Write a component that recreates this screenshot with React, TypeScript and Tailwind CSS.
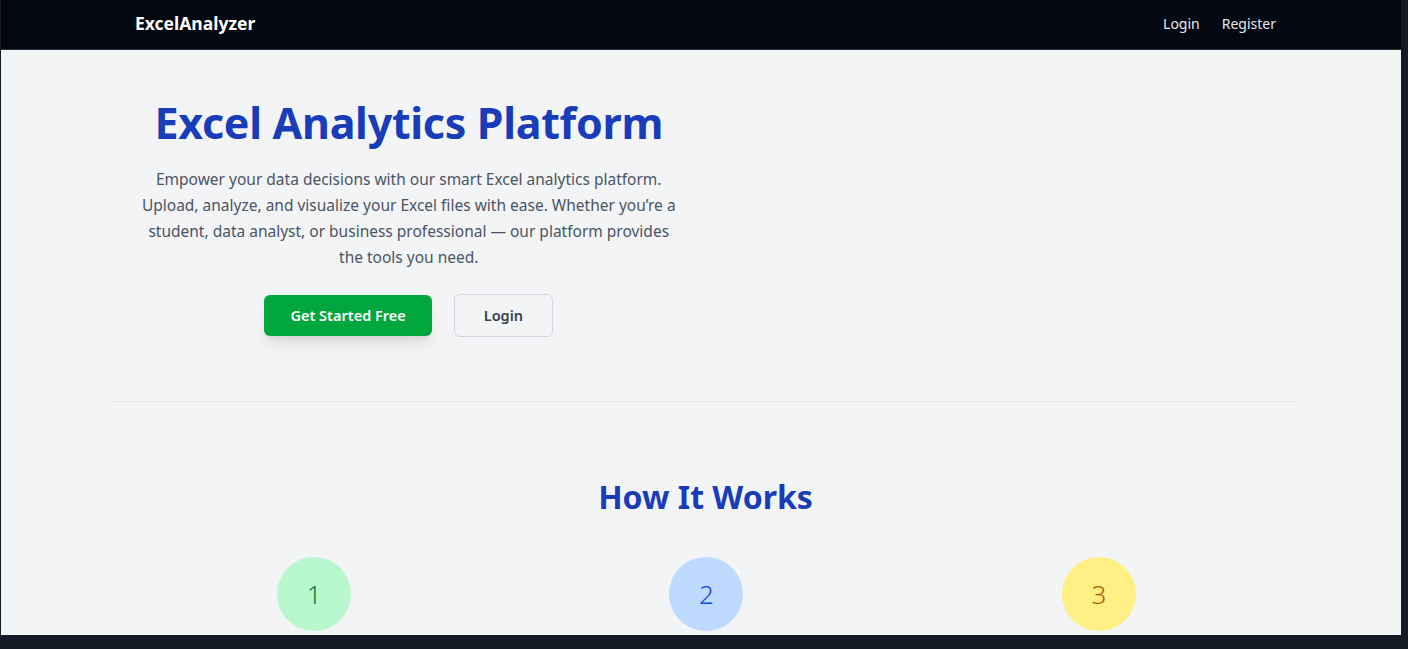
import React from "react";

const steps = [
  { n: "1", bg: "bg-green-200", fg: "text-green-700" },
  { n: "2", bg: "bg-blue-200", fg: "text-blue-700" },
  { n: "3", bg: "bg-yellow-200", fg: "text-yellow-700" },
];

export default function App() {
  return (
    <div className="h-[649px] overflow-hidden bg-[#131a23] pl-px pr-[7px] pb-[14px] [font-family:'Noto_Sans','Open_Sans',sans-serif]">
      <div className="flex h-full flex-col overflow-hidden bg-gray-100">
        <nav className="h-[50px] shrink-0 border-b border-[#2a2f38] bg-[#030712]">
          <div className="flex h-full items-center justify-between pb-[3px] pl-[134px] pr-[125px]">
            <span className="text-[17.5px] font-bold text-white">ExcelAnalyzer</span>
            <div className="flex items-center gap-[22px] text-[14px] text-gray-200">
              <a href="#">Login</a>
              <a href="#">Register</a>
            </div>
          </div>
        </nav>

        <main className="ml-[111px] mr-[102px]">
          <section className="grid grid-cols-2 pt-[45px] pb-[64px]">
            <div className="flex flex-col items-center text-center">
              <h1 className="text-[43px] leading-[56px] font-bold tracking-[-0.3px] text-blue-800">
                Excel Analytics Platform
              </h1>
              <p className="mt-[15px] max-w-[545px] text-[15.5px] leading-[26px] text-gray-600">
                Empower your data decisions with our smart Excel analytics platform. Upload, analyze, and
                visualize your Excel files with ease. Whether you’re a student, data analyst, or business
                professional — our platform provides the tools you need.
              </p>
              <div className="mt-[24px] flex items-center gap-[22px]">
                <button className="h-[41px] rounded-md bg-green-600 px-[26px] text-[14.5px] font-semibold text-white shadow-lg">
                  Get Started Free
                </button>
                <button className="h-[43px] rounded-md border border-gray-300 px-[29px] text-[14.5px] font-semibold text-gray-700">
                  Login
                </button>
              </div>
            </div>
            <div />
          </section>

          <hr className="border-gray-200" />

          <section className="pt-[75px]">
            <h2 className="text-center text-[32px] leading-[40px] font-bold text-blue-800">How It Works</h2>
            <div className="mt-[40px] ml-[6px] mr-[4px] grid grid-cols-3">
              {steps.map((s) => (
                <div key={s.n} className="flex justify-center">
                  <div
                    className={`flex h-[74px] w-[74px] items-center justify-center rounded-full text-[26px] font-light ${s.bg} ${s.fg}`}
                  >
                    {s.n}
                  </div>
                </div>
              ))}
            </div>
          </section>
        </main>
      </div>
    </div>
  );
}
